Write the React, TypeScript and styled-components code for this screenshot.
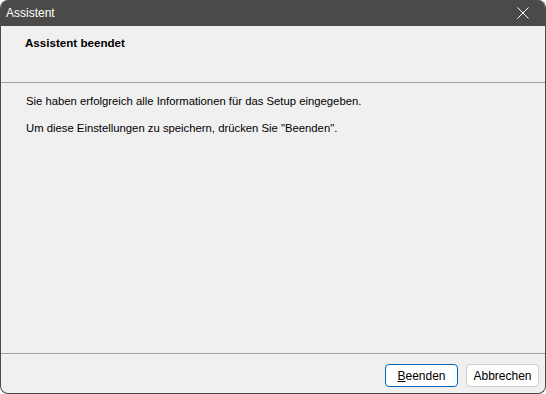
import React from "react";
import styled, { createGlobalStyle } from "styled-components";

const Global = createGlobalStyle`
  html, body { margin: 0; padding: 0; background: #ffffff; }
  #root { width: 546px; height: 394px; }
`;

const Window = styled.div`
  width: 546px;
  height: 394px;
  box-sizing: border-box;
  border: 1px solid #4b4a48;
  border-top: none;
  border-radius: 8px;
  overflow: hidden;
  background: #f0f0f0;
  display: flex;
  flex-direction: column;
  font-family: "Liberation Sans", Arial, sans-serif;
`;

const TitleBar = styled.div`
  height: 26px;
  flex: none;
  background: #4b4a48;
  color: #ffffff;
  display: flex;
  align-items: center;
  justify-content: space-between;
  padding: 0 0 0 6px;
  font-family: "Liberation Sans", Arial, sans-serif;
  font-size: 12px;
  margin: 0 -1px;
`;

const CloseButton = styled.div`
  width: 46px;
  height: 26px;
  display: flex;
  align-items: center;
  justify-content: center;
`;

const Header = styled.div`
  height: 57px;
  flex: none;
  box-sizing: border-box;
  border-bottom: 1px solid #a0a0a0;
  padding: 10px 0 0 24px;
  font-family: "Liberation Sans", Arial, sans-serif;
  font-weight: bold;
  font-size: 11.6px;
  color: #000;
`;

const Body = styled.div`
  flex: 1;
  padding: 11px 0 0 25px;
  display: flex;
  flex-direction: column;
  gap: 12px;
  font-family: "Liberation Sans", Arial, sans-serif;
  font-size: 11.3px;
  color: #000;
`;

const Line = styled.div`
  line-height: 15px;
`;

const Footer = styled.div`
  height: 40px;
  flex: none;
  box-sizing: border-box;
  border-top: 1px solid #a0a0a0;
  display: flex;
  justify-content: flex-end;
  align-items: flex-start;
  gap: 8px;
  padding: 10px 6px 0 0;
`;

const Button = styled.button<{ $primary?: boolean }>`
  width: 73px;
  height: 23px;
  box-sizing: border-box;
  border-radius: 4px;
  border: 1px solid ${(p) => (p.$primary ? "#0067c0" : "#d0d0d0")};
  background: ${(p) => (p.$primary ? "#ffffff" : "#fdfdfd")};
  font-family: "Liberation Sans", Arial, sans-serif;
  font-size: 12px;
  color: #000;
  padding: 0;
  display: flex;
  align-items: center;
  justify-content: center;
`;

export default function App() {
  return (
    <>
      <Global />
      <Window>
        <TitleBar>
          <span>Assistent</span>
          <CloseButton>
            <svg width="12" height="12" viewBox="0 0 12 12">
              <path d="M0.5 0.5 L11.5 11.5 M11.5 0.5 L0.5 11.5" stroke="#fff" strokeWidth="1" />
            </svg>
          </CloseButton>
        </TitleBar>
        <Header>Assistent beendet</Header>
        <Body>
          <Line>Sie haben erfolgreich alle Informationen für das Setup eingegeben.</Line>
          <Line>Um diese Einstellungen zu speichern, drücken Sie "Beenden".</Line>
        </Body>
        <Footer>
          <Button $primary>
            <span><u>B</u>eenden</span>
          </Button>
          <Button>Abbrechen</Button>
        </Footer>
      </Window>
    </>
  );
}
